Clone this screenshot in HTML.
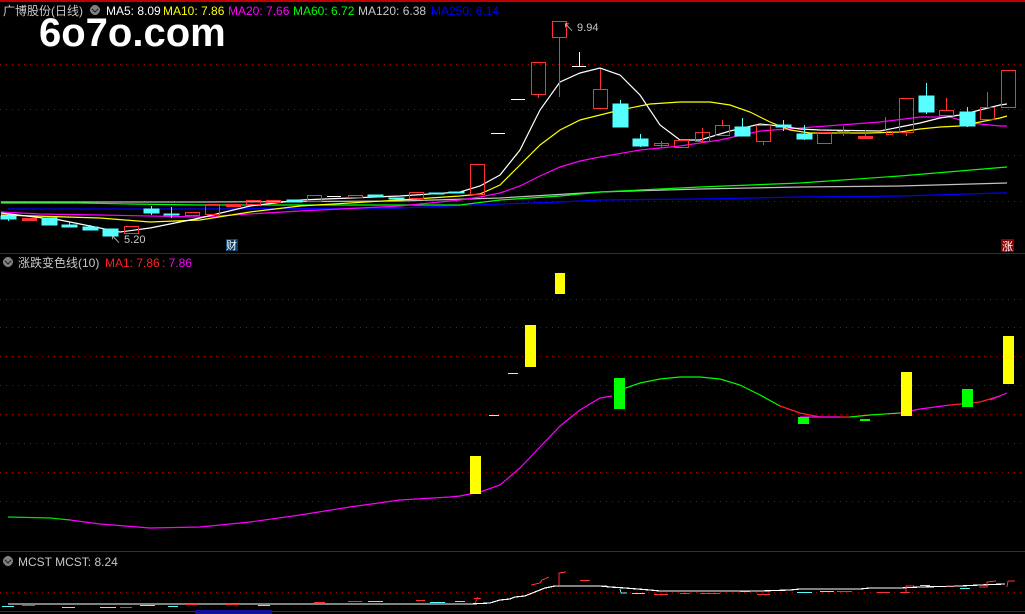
<!DOCTYPE html>
<html><head><meta charset="utf-8"><style>
html,body{margin:0;padding:0;background:#000;width:1025px;height:614px;overflow:hidden}
svg{display:block}
text{font-family:"Liberation Sans","Noto Sans CJK SC",sans-serif}
</style></head><body>
<svg width="1025" height="614" viewBox="0 0 1025 614" xmlns="http://www.w3.org/2000/svg" shape-rendering="crispEdges">
<rect x="0" y="0" width="1025" height="614" fill="#000"/>
<rect x="0" y="0" width="1025" height="2" fill="#c00000"/>
<!-- top grid -->
<g stroke="#a00000" stroke-width="1" stroke-dasharray="1,5">
<line x1="0" y1="64.5" x2="1025" y2="64.5"/><line x1="0" y1="109.5" x2="1025" y2="109.5"/>
<line x1="0" y1="155.5" x2="1025" y2="155.5"/><line x1="0" y1="201.5" x2="1025" y2="201.5"/>
</g>
<line x1="0" y1="253.5" x2="1025" y2="253.5" stroke="#a00000"/>
<line x1="0" y1="551.5" x2="1025" y2="551.5" stroke="#a00000"/>
<!-- header -->
<text x="3" y="15" font-size="12" fill="#c8c8c8">广博股份(日线)</text>
<circle cx="95" cy="10" r="5" fill="#808080"/><path d="M92 9 L95 12 L98 9" stroke="#222" fill="none" stroke-width="1.4"/>
<text x="106" y="15" font-size="12" fill="#fff">MA5: 8.09</text>
<text x="163" y="15" font-size="12" fill="#ffff00">MA10: 7.86</text>
<text x="228" y="15" font-size="12" fill="#ff00ff">MA20: 7.66</text>
<text x="293" y="15" font-size="12" fill="#00ff00">MA60: 6.72</text>
<text x="358" y="15" font-size="12" fill="#c8c8c8">MA120: 6.38</text>
<text x="431" y="15" font-size="12" fill="#0000ff">MA250: 6.14</text>
<text x="39" y="46" font-size="40" font-weight="bold" fill="#fff">6o7o.com</text>
<!-- MA lines -->
<g fill="none" stroke-width="1.2" shape-rendering="auto">
<polyline stroke="#0000ff" points="8,209 200,209 400,208 500,204 560,202 600,200 700,199 800,197 900,196 1000,193 1007,193"/>
<polyline stroke="#c0c0c0" points="1,202 200,202 400,201 500,198 600,192 700,189 800,187 900,186 1007,183"/>
<polyline stroke="#00ff00" points="1,203 80,203 130,204 200,205 400,205 460,205 500,200 560,196 600,192 700,187 800,183 900,176 1007,167"/>
<polyline stroke="#ff00ff" points="1,212 40,214 100,215 200,217 300,211 400,206 460,200 480,197 500,193 520,186 540,176 560,167 580,161 600,157 640,150 680,146 720,140 760,131 800,128 840,125 880,122 920,117 950,117 970,123 1000,126 1007,126"/>
<polyline stroke="#ffff00" points="1,215 100,218 150,222 200,220 250,212 300,206 400,200 460,196 480,194 500,185 520,165 540,145 560,130 580,120 600,115 620,110 650,104 680,102 710,102 730,105 750,112 770,122 790,130 810,133 870,133 900,132 920,129 940,127 960,126 980,122 1000,118 1007,116"/>
<polyline stroke="#fff" points="1,213 60,220 120,232 150,228 200,218 250,206 300,200 400,196 460,192 480,186 500,175 520,150 540,110 560,82 580,73 600,68 620,75 640,95 660,125 680,140 700,140 730,131 760,124 780,126 800,129 820,130 880,131 900,127 920,123 940,118 960,115 980,110 1000,105 1007,104"/>
</g>
<!-- candles -->
<g stroke-width="1">
<g fill="#55ffff" stroke="#55ffff">
<rect x="1" y="216" width="15" height="3"/><line x1="8.5" y1="213" x2="8.5" y2="221"/>
<rect x="42" y="218" width="15" height="7"/>
<rect x="62" y="225" width="15" height="2"/><line x1="69.5" y1="222" x2="69.5" y2="226"/>
<rect x="83" y="227" width="15" height="3"/><line x1="90.5" y1="225" x2="90.5" y2="228"/>
<rect x="103" y="229" width="15" height="7"/>
<rect x="144" y="209" width="15" height="4"/><line x1="151.5" y1="206" x2="151.5" y2="215"/>
<rect x="164" y="214" width="15" height="1"/><line x1="171.5" y1="207" x2="171.5" y2="218"/>
<rect x="287" y="200" width="15" height="2"/>
<rect x="368" y="195" width="15" height="2"/>
<rect x="389" y="198" width="15" height="1"/>
<rect x="429" y="193" width="15" height="1"/>
<rect x="449" y="192" width="15" height="1"/>
<rect x="613" y="104" width="15" height="23"/><line x1="620.5" y1="100" x2="620.5" y2="104"/>
<rect x="633" y="139" width="15" height="7"/><line x1="640.5" y1="134" x2="640.5" y2="147"/>
<rect x="735" y="127" width="15" height="9"/><line x1="742.5" y1="118" x2="742.5" y2="127"/>
<rect x="776" y="125" width="15" height="2"/><line x1="783.5" y1="120" x2="783.5" y2="131"/>
<rect x="797" y="134" width="15" height="5"/><line x1="804.5" y1="125" x2="804.5" y2="140"/>
<rect x="919" y="96" width="15" height="16"/><line x1="926.5" y1="83" x2="926.5" y2="114"/>
<rect x="960" y="112" width="15" height="14"/><line x1="967.5" y1="107" x2="967.5" y2="127"/>
</g>
<g fill="none" stroke="#ff3030">
<rect x="22.5" y="218.5" width="14" height="2" fill="#ff3030"/>
<rect x="124.5" y="226.5" width="14" height="7"/>
<rect x="185.5" y="212.5" width="14" height="3"/>
<rect x="205.5" y="204.5" width="14" height="10"/>
<rect x="226.5" y="204.5" width="14" height="2" fill="#ff3030"/>
<rect x="246.5" y="200.5" width="14" height="4"/>
<rect x="266.5" y="200.5" width="14" height="2"/>
<rect x="307.5" y="195.5" width="14" height="6"/>
<rect x="348.5" y="195.5" width="14" height="2"/>
<rect x="409.5" y="192.5" width="14" height="6"/>
<rect x="470.5" y="164.5" width="14" height="30"/>
<rect x="531.5" y="62.5" width="14" height="32"/><line x1="538.5" y1="95" x2="538.5" y2="98"/>
<rect x="552.5" y="21.5" width="14" height="16"/><line x1="559.5" y1="38" x2="559.5" y2="97"/>
<rect x="593.5" y="89.5" width="14" height="19"/><line x1="600.5" y1="69" x2="600.5" y2="89"/>
<rect x="654.5" y="143.5" width="14" height="2"/><line x1="661.5" y1="141" x2="661.5" y2="148"/>
<rect x="674.5" y="140.5" width="14" height="7"/>
<rect x="695.5" y="132.5" width="14" height="9"/><line x1="702.5" y1="128" x2="702.5" y2="143"/>
<rect x="715.5" y="125.5" width="14" height="10"/><line x1="722.5" y1="120" x2="722.5" y2="125"/>
<rect x="756.5" y="125.5" width="14" height="16"/><line x1="763.5" y1="142" x2="763.5" y2="145"/>
<rect x="817.5" y="132.5" width="14" height="11"/>
<rect x="837.5" y="131.5" width="12" height="2"/><line x1="843.5" y1="126" x2="843.5" y2="136"/>
<rect x="858.5" y="136.5" width="14" height="2" fill="#ff3030"/><line x1="865.5" y1="130" x2="865.5" y2="136"/>
<rect x="886.5" y="131.5" width="6" height="3"/><line x1="885.5" y1="117" x2="885.5" y2="131"/>
<rect x="899.5" y="98.5" width="14" height="34"/><line x1="906.5" y1="133" x2="906.5" y2="136"/>
<rect x="939.5" y="110.5" width="14" height="5"/><line x1="946.5" y1="98" x2="946.5" y2="110"/>
<rect x="980.5" y="107.5" width="14" height="12"/><line x1="987.5" y1="92" x2="987.5" y2="107"/>
<rect x="1001.5" y="70.5" width="14" height="37"/>
</g>
<g stroke="#fff" fill="#fff">
<line x1="491" y1="133.5" x2="505" y2="133.5"/>
<line x1="511" y1="99.5" x2="525" y2="99.5"/>
<line x1="572" y1="66.5" x2="586" y2="66.5"/><line x1="579.5" y1="52" x2="579.5" y2="66"/>
<line x1="327" y1="196.5" x2="341" y2="196.5"/>
</g>
</g>
<text x="563" y="31" font-size="11" fill="#c8c8c8">↖ 9.94</text>
<text x="110" y="243" font-size="11" fill="#c8c8c8">↖ 5.20</text>
<rect x="226" y="239" width="12" height="12" fill="#0a3d6b"/><text x="226" y="249" font-size="11" fill="#fff">财</text>
<rect x="1001" y="239" width="13" height="13" fill="#8b0000"/><text x="1002" y="250" font-size="11" fill="#fff">涨</text>
<!-- middle panel -->
<circle cx="8" cy="262" r="5" fill="#808080"/><path d="M5 261 L8 264 L11 261" stroke="#222" fill="none" stroke-width="1.4"/>
<text x="18" y="267" font-size="12" fill="#c8c8c8">涨跌变色线(10)</text>
<text x="105" y="267" font-size="12" fill="#ff2020">MA1: 7.86</text>
<text x="162" y="267" font-size="12" fill="#ff00ff">: 7.86</text>
<g stroke="#a00000" stroke-dasharray="1,5">
<line x1="0" y1="299.5" x2="1025" y2="299.5"/><line x1="0" y1="327.5" x2="1025" y2="327.5"/>
<line x1="0" y1="356.5" x2="1025" y2="356.5"/><line x1="0" y1="385.5" x2="1025" y2="385.5"/>
<line x1="0" y1="414.5" x2="1025" y2="414.5"/><line x1="0" y1="443.5" x2="1025" y2="443.5"/>
<line x1="0" y1="472.5" x2="1025" y2="472.5"/><line x1="0" y1="501.5" x2="1025" y2="501.5"/>
</g>
<g fill="none" stroke-width="1.2" shape-rendering="auto">
<polyline stroke="#00e000" points="8,517 50,518 70,520"/>
<polyline stroke="#ff00ff" points="70,520 100,524 150,528 200,527 250,522 300,515 350,507 400,500 450,497 460,496 480,492 500,485 520,468 540,447 560,426 580,410 600,398 612,396"/>
<polyline stroke="#00ff00" points="620,390 640,383 660,379 680,377 700,377 720,379 740,385 760,395 780,406"/>
<polyline stroke="#ff2020" points="780,406 800,413 820,417 850,417"/>
<polyline stroke="#ff00ff" points="800,417 840,417"/>
<polyline stroke="#00ff00" points="850,417 870,415 900,413"/>
<polyline stroke="#ff00ff" points="900,413 920,409 950,405"/>
<polyline stroke="#ff2020" points="950,405 980,402 1000,396"/>
<polyline stroke="#ff00ff" points="990,400 1007,393"/>
</g>
<g fill="#ffff00">
<rect x="470" y="456" width="11" height="38"/><rect x="489" y="415" width="10" height="1"/>
<rect x="508" y="373" width="10" height="1"/><rect x="525" y="325" width="11" height="42"/>
<rect x="555" y="273" width="10" height="21"/><rect x="901" y="372" width="11" height="44"/>
<rect x="1003" y="336" width="11" height="48"/>
</g>
<g fill="#00ff00">
<rect x="614" y="378" width="11" height="31"/><rect x="798" y="417" width="11" height="7"/>
<rect x="860" y="419" width="10" height="2"/><rect x="962" y="389" width="11" height="18"/>
</g>
<!-- bottom panel -->
<circle cx="8" cy="561" r="5" fill="#808080"/><path d="M5 560 L8 563 L11 560" stroke="#222" fill="none" stroke-width="1.4"/>
<text x="18" y="566" font-size="12" fill="#c8c8c8">MCST  MCST: 8.24</text>
<line x1="0" y1="592.5" x2="1025" y2="592.5" stroke="#a00000" stroke-dasharray="1,5"/>
<line x1="0" y1="611.5" x2="1025" y2="611.5" stroke="#a00000"/>
<rect x="195" y="610" width="77" height="4" fill="#1010a0"/>
<polyline fill="none" stroke="#fff" stroke-width="1.2" points="8,604 470,604 490,603 500,600 510,599 515,597 525,596 535,592 545,588 555,586 575,586 600,586 610,587 625,588 650,590 660,591 760,591 790,590 800,589 860,589 870,588 900,588 920,587 960,586 980,585 1005,584"/>
<g stroke="#ff3030" fill="none">
<line x1="22" y1="605.5" x2="35" y2="605.5"/><line x1="120" y1="607.5" x2="132" y2="607.5"/><line x1="185" y1="604.5" x2="198" y2="604.5"/>
<line x1="226" y1="604.5" x2="240" y2="604.5"/><line x1="314" y1="602.5" x2="325" y2="602.5"/><line x1="348" y1="601.5" x2="362" y2="601.5"/>
<line x1="416" y1="600.5" x2="425" y2="600.5"/><line x1="474" y1="598.5" x2="481" y2="598.5"/><polyline points="475,603 478,597"/>
<polyline points="531,585 540,583 542,580 549,577"/><polyline points="559,585 559,573 566,572"/>
<line x1="580" y1="580.5" x2="590" y2="580.5"/>
<line x1="600" y1="585.5" x2="607" y2="585.5"/><line x1="654" y1="594.5" x2="668" y2="594.5"/><line x1="680" y1="593.5" x2="690" y2="593.5"/>
<line x1="700" y1="593.5" x2="720" y2="593.5"/><line x1="757" y1="594.5" x2="770" y2="594.5"/><line x1="837" y1="591.5" x2="852" y2="591.5"/>
<line x1="877" y1="592.5" x2="890" y2="592.5"/><line x1="900" y1="592.5" x2="910" y2="592.5"/><polyline points="906,593 906,586 914,586"/>
<polyline points="946,586 954,586"/><polyline points="979,587 987,587 987,582 996,581"/><polyline points="1007,587 1008,581 1015,581"/>
</g>
<g stroke="#55ffff" fill="none">
<line x1="2" y1="606.5" x2="14" y2="606.5"/><line x1="62" y1="607.5" x2="75" y2="607.5"/><line x1="100" y1="607.5" x2="116" y2="607.5"/>
<line x1="140" y1="605.5" x2="155" y2="605.5"/><line x1="168" y1="606.5" x2="178" y2="606.5"/><line x1="258" y1="605.5" x2="270" y2="605.5"/>
<line x1="368" y1="601.5" x2="383" y2="601.5"/><line x1="430" y1="602.5" x2="445" y2="602.5"/><line x1="455" y1="601.5" x2="465" y2="601.5"/>
<polyline points="620,589 621,593 627,593"/><line x1="632" y1="593.5" x2="645" y2="593.5"/><line x1="740" y1="591.5" x2="750" y2="591.5"/>
<line x1="797" y1="592.5" x2="812" y2="592.5"/><line x1="820" y1="591.5" x2="834" y2="591.5"/><line x1="920" y1="585.5" x2="930" y2="585.5"/>
<line x1="960" y1="588.5" x2="970" y2="588.5"/>
</g>
</svg>
</body></html>
